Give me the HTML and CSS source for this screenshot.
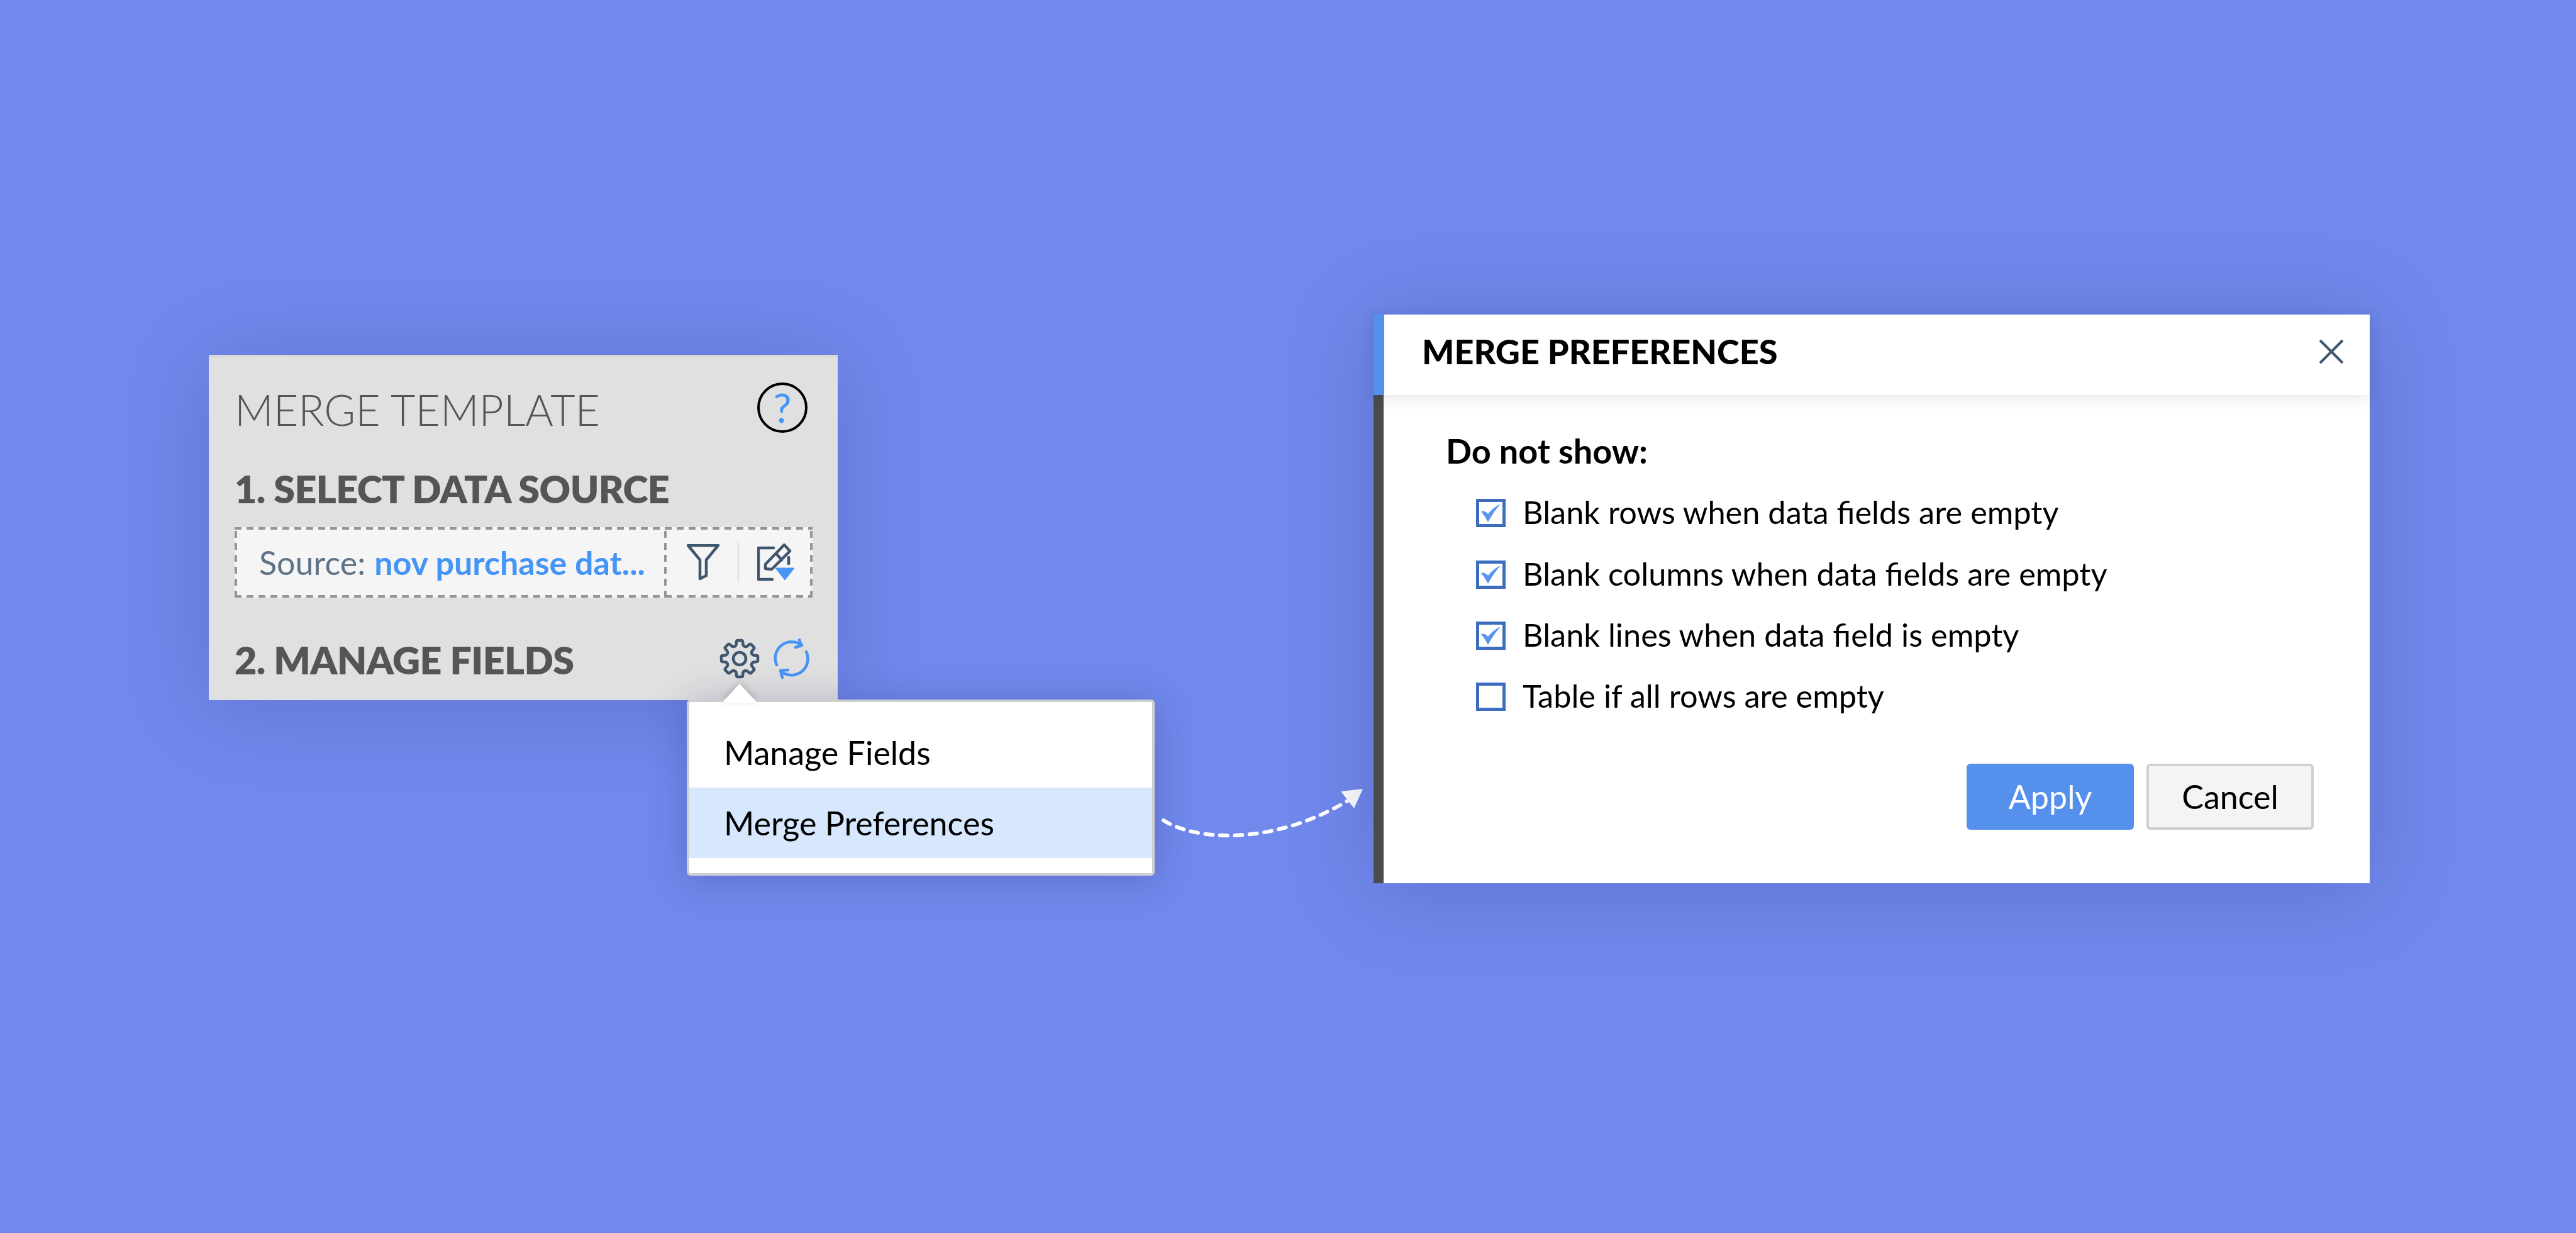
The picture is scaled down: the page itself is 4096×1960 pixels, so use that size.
FILE: index.html
```html
<!DOCTYPE html>
<html lang="en">
<head>
<meta charset="utf-8">
<title>Merge Preferences</title>
<link rel="stylesheet" href="styles.css">
</head>
<body>
<main class="stage">
  <section class="panel">
    <header class="panel-head">
      <h1 class="panel-title">MERGE TEMPLATE</h1>
      <span class="help">?</span>
    </header>
    <h2 class="step step-one">1. SELECT DATA SOURCE</h2>
    <div class="source">
      <div class="source-field"><span class="source-label">Source:</span> <span class="source-name">nov purchase dat...</span></div>
      <div class="source-tools">
        <svg class="icon-funnel" viewBox="0 0 52 58"><path class="ink" d="M2 2H50L31 25V50L21 55V25Z"/></svg>
        <span class="tool-sep"></span>
        <svg class="icon-edit" viewBox="0 0 60 60">
          <path class="ink" d="M26 7H2V57H24"/>
          <path class="ink" d="M43 2L52 12L23 41L13 40V33Z"/>
          <path class="ink" d="M30 16L39 26"/>
          <path class="ink" d="M50 22V32"/>
          <path class="blue-fill" d="M29 39H59L44 58Z"/>
        </svg>
      </div>
    </div>
    <div class="manage-row">
      <h2 class="step">2. MANAGE FIELDS</h2>
      <div class="manage-icons">
        <svg class="icon-gear" viewBox="0 0 64 64">
          <defs><path id="tooth" d="M23.96 12.6Q26 12 26.5 10L27 5Q27.3 3 29 3H35Q36.7 3 37 5L37.5 10Q38 12 40.04 12.6"/></defs>
          <g class="ink">
            <use href="#tooth"/>
            <use href="#tooth" transform="rotate(45 32 32)"/>
            <use href="#tooth" transform="rotate(90 32 32)"/>
            <use href="#tooth" transform="rotate(135 32 32)"/>
            <use href="#tooth" transform="rotate(180 32 32)"/>
            <use href="#tooth" transform="rotate(225 32 32)"/>
            <use href="#tooth" transform="rotate(270 32 32)"/>
            <use href="#tooth" transform="rotate(315 32 32)"/>
            <circle cx="32" cy="32" r="10"/>
          </g>
        </svg>
        <svg class="icon-refresh" viewBox="0 0 60 64">
          <g class="blue-line">
            <path d="M7 42A26 26 0 0 1 47 11"/>
            <path d="M43 2L46 11L37 14"/>
            <path d="M54 21A26 26 0 0 1 18 55"/>
            <path d="M25 50L13 51L16 62"/>
          </g>
        </svg>
      </div>
    </div>
  </section>

  <nav class="menu">
    <span class="menu-tip"></span>
    <div class="menu-item">Manage Fields</div>
    <div class="menu-item menu-item-active">Merge Preferences</div>
  </nav>

  <svg class="flow-arrow" viewBox="0 0 330 100">
    <path class="flow-line" d="M4 52C50 82 170 96 297 21"/>
    <path class="flow-head" d="M321 2L286 6L307 33Z"/>
  </svg>

  <section class="dialog">
    <header class="dialog-head">
      <h2 class="dialog-title">MERGE PREFERENCES</h2>
      <svg class="icon-close" viewBox="0 0 40 40"><path class="ink-thin" d="M2 2L38 38M38 2L2 38"/></svg>
    </header>
    <div class="dialog-body">
      <p class="dialog-label">Do not show:</p>
      <ul class="options">
        <li class="option">
          <svg class="box" viewBox="0 0 47 45"><rect class="box-frame" x="2.5" y="2.5" width="42" height="40"/><path class="box-check" d="M8 20Q14 18 19 24Q28 13 39 8Q28 20 19 37Q14 27 8 20Z"/></svg>
          <span class="option-text">Blank rows when data fields are empty</span>
        </li>
        <li class="option">
          <svg class="box" viewBox="0 0 47 45"><rect class="box-frame" x="2.5" y="2.5" width="42" height="40"/><path class="box-check" d="M8 20Q14 18 19 24Q28 13 39 8Q28 20 19 37Q14 27 8 20Z"/></svg>
          <span class="option-text">Blank columns when data fields are empty</span>
        </li>
        <li class="option">
          <svg class="box" viewBox="0 0 47 45"><rect class="box-frame" x="2.5" y="2.5" width="42" height="40"/><path class="box-check" d="M8 20Q14 18 19 24Q28 13 39 8Q28 20 19 37Q14 27 8 20Z"/></svg>
          <span class="option-text">Blank lines when data field is empty</span>
        </li>
        <li class="option">
          <svg class="box" viewBox="0 0 47 45"><rect class="box-frame" x="2.5" y="2.5" width="42" height="40"/></svg>
          <span class="option-text">Table if all rows are empty</span>
        </li>
      </ul>
      <div class="actions">
        <button class="btn btn-primary" type="button">Apply</button>
        <button class="btn btn-secondary" type="button">Cancel</button>
      </div>
    </div>
  </section>
</main>
</body>
</html>
```
FILE: styles.css
```css
* { box-sizing: border-box; }

html, body {
  margin: 0;
  padding: 0;
}

body {
  width: 4096px;
  height: 1960px;
  overflow: hidden;
  background: #7189ec;
  font-family: Lato, "Open Sans", sans-serif;
  color: #000;
}

.stage {
  position: relative;
  width: 4096px;
  height: 1960px;
}

h1, h2, p, ul { margin: 0; padding: 0; }

/* shared icon paints */
.ink, .ink use {
  fill: none;
  stroke: #40566e;
  stroke-width: 4.5;
  stroke-linecap: round;
  stroke-linejoin: round;
}
.ink-thin {
  fill: none;
  stroke: #40566e;
  stroke-width: 4;
}
.blue-fill { fill: #4595f6; stroke: #4595f6; stroke-width: 1; stroke-linejoin: round; }
.blue-line {
  fill: none;
  stroke: #4595f6;
  stroke-width: 4.5;
  stroke-linecap: round;
  stroke-linejoin: round;
}

/* left panel */
.panel {
  position: absolute;
  left: 332px;
  top: 564px;
  width: 1000px;
  height: 549px;
  padding: 40px 41px 0;
  background: #e0e0e0;
  border-top: 4px solid #d9d9d9;
  box-shadow: 0 10px 130px rgba(20, 30, 110, .2);
}

.panel-head {
  display: flex;
  justify-content: space-between;
  align-items: center;
  height: 80px;
  padding-right: 7px;
}

.panel-title {
  padding-top: 6px;
  font-size: 68px;
  font-weight: 300;
  color: #555;
  line-height: 80px;
}

.help {
  display: flex;
  align-items: center;
  justify-content: center;
  width: 80px;
  height: 80px;
  border: 4px solid #000;
  border-radius: 50%;
  color: #4595f6;
  font-size: 64px;
  line-height: 1;
}

.step {
  font-size: 61px;
  font-weight: 800;
  letter-spacing: -0.6px;
  color: #555;
  line-height: 72px;
}
.step-one { margin-top: 53px; }

.source {
  display: flex;
  width: 919px;
  height: 112px;
  margin-top: 25px;
  background-color: #f5f5f5;
  background-image:
    repeating-linear-gradient(90deg, #959595 0 11px, transparent 11px 19px),
    repeating-linear-gradient(90deg, #959595 0 11px, transparent 11px 19px),
    repeating-linear-gradient(0deg, #959595 0 11px, transparent 11px 19px),
    repeating-linear-gradient(0deg, #959595 0 11px, transparent 11px 19px),
    repeating-linear-gradient(0deg, #959595 0 11px, transparent 11px 19px);
  background-size: 100% 4px, 100% 4px, 4px 100%, 4px 100%, 4px 100%;
  background-position: 0 0, 0 100%, 0 0, 100% 0, 683px 0;
  background-repeat: no-repeat;
}

.source-field {
  display: flex;
  align-items: center;
  gap: 14px;
  width: 687px;
  padding-left: 39px;
  font-size: 52px;
  white-space: nowrap;
}
.source-label { color: #5f7286; }
.source-name { color: #4595f6; font-weight: 700; }

.source-tools {
  display: flex;
  align-items: center;
  padding-left: 32px;
}
.icon-funnel { width: 52px; height: 58px; }
.tool-sep {
  width: 4px;
  height: 64px;
  margin: 0 28px;
  background: #e8e8e8;
}
.icon-edit { width: 60px; height: 60px; }

.manage-row {
  display: flex;
  align-items: center;
  justify-content: space-between;
  height: 64px;
  margin-top: 67px;
}
.manage-icons {
  display: flex;
  align-items: center;
  gap: 20px;
  padding: 0 3px 4px 0;
}
.icon-gear { width: 64px; height: 64px; }
.icon-refresh { width: 60px; height: 64px; }

/* dropdown menu */
.menu {
  position: absolute;
  left: 1092px;
  top: 1112px;
  width: 744px;
  height: 280px;
  padding-top: 24px;
  background: #fff;
  border: 4px solid #cfcfcf;
  border-radius: 6px;
  box-shadow: 0 6px 60px rgba(20, 30, 110, .25);
}
.menu-tip {
  position: absolute;
  left: 52px;
  top: -29px;
  width: 0;
  height: 0;
  border-left: 28px solid transparent;
  border-right: 28px solid transparent;
  border-bottom: 30px solid #fff;
  filter: drop-shadow(0 -3px 6px rgba(0, 0, 0, .18));
}
.menu-item {
  display: flex;
  align-items: center;
  height: 112px;
  padding-left: 55px;
  font-size: 52px;
}
.menu-item-active { background: #d6e7fe; }

/* connector */
.flow-arrow {
  position: absolute;
  left: 1846px;
  top: 1252px;
  width: 330px;
  height: 100px;
}
.flow-line {
  fill: none;
  stroke: #fff;
  stroke-width: 6;
  stroke-linecap: round;
  stroke-dasharray: 12 11.5;
}
.flow-head { fill: #fff; }

/* dialog */
.dialog {
  position: absolute;
  left: 2184px;
  top: 500px;
  width: 1584px;
  height: 904px;
  background: #fff;
  border-left: 16px solid #4b4b4b;
  box-shadow: 0 10px 130px rgba(20, 30, 110, .22);
}
.dialog-head {
  position: relative;
  display: flex;
  align-items: center;
  justify-content: space-between;
  height: 128px;
  margin-left: -16px;
  padding: 0 41px 10px 60px;
  background: #fff;
  border-left: 17px solid #5590ec;
  box-shadow: 0 4px 22px rgba(0, 0, 0, .1);
}
.dialog-title {
  font-size: 54px;
  font-weight: 900;
  line-height: 64px;
}
.icon-close { width: 40px; height: 40px; }

.dialog-body { padding: 57px 89px 0 99px; }
.dialog-label {
  font-size: 54px;
  font-weight: 700;
  line-height: 64px;
}
.options {
  list-style: none;
  margin: 18px 0 0 48px;
}
.option {
  display: flex;
  align-items: center;
  gap: 27px;
  height: 97.4px;
  font-size: 50.5px;
}
.option-text { padding-bottom: 4px; }
.box { width: 47px; height: 45px; flex: none; }
.box-frame { fill: #fff; stroke: #3d6dbf; stroke-width: 5; }
.box-check { fill: #5a93ef; }

.actions {
  display: flex;
  justify-content: flex-end;
  gap: 20px;
  margin-top: 57px;
}
.btn {
  width: 266px;
  height: 105px;
  border-radius: 6px;
  font-family: inherit;
  font-size: 52px;
  padding: 0;
}
.btn-primary { background: #5590ec; border: 0; color: #fff; }
.btn-secondary { background: #f4f4f4; border: 4px solid #d0d0d0; color: #000; }
```
